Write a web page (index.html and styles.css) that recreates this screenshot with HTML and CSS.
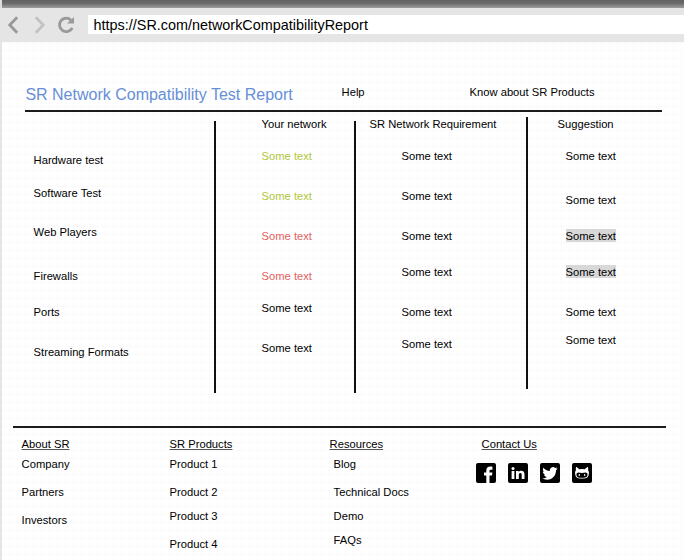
FILE: index.html
```html
<!DOCTYPE html>
<html lang="en">
<head>
<meta charset="utf-8">
<title>SR Network Compatibility Test Report</title>
<link rel="stylesheet" href="styles.css">
</head>
<body>
<div class="titlebar"></div>
<nav class="toolbar">
  <svg class="controls" width="88" height="34" viewBox="0 8 88 34" fill="none">
    <path d="M17.2 17.3 9.800 25l7.400 7.700" stroke="#999" stroke-width="2.800"/>
    <path d="M35.800 17.300 43.200 25l-7.400 7.700" stroke="#c2c2c2" stroke-width="2.800"/>
    <path d="M71 20.200A6.700 6.700 0 1 0 72.300 27.800" stroke="#999" stroke-width="2.800"/>
    <path d="M74 17v6.400h-7z" fill="#999"/>
  </svg>
  <div class="address">https://SR.com/networkCompatibilityReport</div>
</nav>
<main class="page">
  <header class="header">
    <h1>SR Network Compatibility Test Report</h1>
    <a class="help">Help</a>
    <a class="know">Know about SR Products</a>
  </header>
  <section class="report">
    <ul class="tests">
      <li>Hardware test</li>
      <li class="g17">Software Test</li>
      <li class="g23">Web Players</li>
      <li class="g28">Firewalls</li>
      <li class="g20">Ports</li>
      <li class="g24">Streaming Formats</li>
    </ul>
    <div class="divider"></div>
    <ul class="network">
      <li>Your network</li>
      <li class="g16 pass">Some text</li>
      <li class="g24 pass">Some text</li>
      <li class="g24 fail">Some text</li>
      <li class="g24 fail">Some text</li>
      <li class="g16">Some text</li>
      <li class="g24">Some text</li>
    </ul>
    <div class="divider"></div>
    <ul class="requirement">
      <li class="heading">SR Network Requirement</li>
      <li class="g16">Some text</li>
      <li class="g24">Some text</li>
      <li class="g24">Some text</li>
      <li class="g20">Some text</li>
      <li class="g24">Some text</li>
      <li class="g16">Some text</li>
    </ul>
    <div class="divider divider-high"></div>
    <ul class="suggestion">
      <li class="heading">Suggestion</li>
      <li class="g16">Some text</li>
      <li class="g28">Some text</li>
      <li class="g20"><mark>Some text</mark></li>
      <li class="g20"><mark>Some text</mark></li>
      <li class="g24">Some text</li>
      <li class="g12">Some text</li>
    </ul>
  </section>
  <footer class="footer">
    <ul class="about">
      <li><u>About SR</u></li>
      <li class="g4">Company</li>
      <li class="g12">Partners</li>
      <li class="g12">Investors</li>
    </ul>
    <ul class="products">
      <li><u>SR Products</u></li>
      <li class="g4">Product 1</li>
      <li class="g12">Product 2</li>
      <li class="g8">Product 3</li>
      <li class="g12">Product 4</li>
    </ul>
    <ul class="resources">
      <li class="heading"><u>Resources</u></li>
      <li class="g4">Blog</li>
      <li class="g12">Technical Docs</li>
      <li class="g8">Demo</li>
      <li class="g8">FAQs</li>
    </ul>
    <div class="contact">
      <u>Contact Us</u>
      <div class="social">
        <svg viewBox="0 0 20 20"><rect width="20" height="20" rx="2"/><path fill="#fff" d="M10.300 20v-7.500H8V9.400h2.300V7.500c0-2.700 1.600-3.900 3.900-3.900 1 0 1.800.1 2.200.2v2.900h-1.400c-1.200 0-1.500.5-1.500 1.300v1.400h2.900l-.4 3.100h-2.500V20z"/></svg>
        <svg viewBox="0 0 20 20"><rect width="20" height="20" rx="2"/><path fill="#fff" d="M3.600 8h2.800v8H3.600zM8 8h2.700v1.100c.6-.9 1.400-1.300 2.600-1.300 2.300 0 3.200 1.400 3.200 3.800V16h-2.800v-4.200c0-1.100-.4-1.800-1.300-1.800-1.100 0-1.600.8-1.600 1.900V16H8z"/><circle cx="5" cy="5.400" r="1.500" fill="#fff"/></svg>
        <svg viewBox="0 0 20 20"><rect width="20" height="20" rx="2"/><path fill="#fff" d="M17.600 5.500c-.6.300-1.200.4-1.800.5.700-.4 1.100-1 1.400-1.700-.6.400-1.300.6-2 .8A3.200 3.200 0 0 0 9.800 8C7.200 7.900 4.900 6.700 3.300 4.700c-.9 1.500-.4 3.300 1 4.300-.5 0-1-.2-1.500-.4 0 1.500 1.100 2.800 2.600 3.100-.5.100-1 .2-1.500.1.400 1.200 1.600 2.100 3 2.200-1.300 1-2.900 1.500-4.700 1.300 1.400.9 3.100 1.400 4.900 1.400 5.600 0 9-4.600 8.900-9.500.6-.4 1.200-1 1.600-1.700z"/></svg>
        <svg viewBox="0 0 20 20"><rect width="20" height="20" rx="2"/><path fill="#fff" d="M4.200 3.800 7.300 6.200Q10 5.600 12.700 6.200L15.800 3.800Q16.500 5.500 16.100 7.200 17.200 8.500 16.900 10.700 16.400 15.200 12.500 15.400H7.500Q3.600 15.200 3.100 10.700 2.800 8.500 3.900 7.200 3.500 5.500 4.200 3.800z"/><path d="M6.300 9.600Q10 10.300 13.700 9.600 16 9.800 15.600 12 15.200 14.500 12.200 14.700H7.800Q4.800 14.500 4.400 12 4 9.800 6.300 9.600z"/><ellipse cx="7.300" cy="12" rx=".7" ry="1.100" fill="#fff"/><ellipse cx="12.700" cy="12" rx=".7" ry="1.100" fill="#fff"/></svg>
      </div>
    </div>
  </footer>
</main>
</body>
</html>
```
FILE: styles.css
```css
* { box-sizing: border-box; }
body {
  margin: 0;
  height: 560px;
  overflow: hidden;
  background: #fff;
  color: #000;
  font: 11.2px/16px "Liberation Sans", Arial, sans-serif;
}
ul { list-style: none; margin: 0; padding: 0; flex: none; }
li { white-space: nowrap; }
.titlebar {
  height: 8px;
  border-left: 2px solid #ddd;
  background: linear-gradient(#616161 0, #696969 40%, #9d9d9d 100%);
}
.toolbar {
  height: 34px;
  display: flex;
  align-items: center;
  background: #e5e5e5;
}
.controls { flex: none; display: block; }
.address {
  flex: 1;
  height: 19px;
  margin-bottom: 1px;
  padding-left: 5.6px;
  background: #fff;
  font-size: 14.4px;
  line-height: 20px;
}
.page {
  height: 518px;
  padding-top: 42px;
  border-left: 2px solid #e5e5e5;
  background-color: #fff;
  background-image:
    linear-gradient(90deg, #fafafa 1px, transparent 1px),
    linear-gradient(#fafafa 1px, transparent 1px);
  background-size: 8px 8px;
  background-position: 7px 0;
}
.header {
  display: flex;
  width: 637px;
  height: 28px;
  margin-left: 23.4px;
  border-bottom: 2px solid #1c1c1c;
}
h1 {
  width: 316.2px;
  margin: 0;
  color: #668fd8;
  font-size: 16px;
  font-weight: normal;
  line-height: 21px;
}
.help { width: 128px; }
.report {
  display: flex;
  height: 314px;
  padding-top: 4px;
}
.tests { width: 212px; padding: 36px 0 0 31.6px; }
.divider {
  flex: none;
  width: 2px;
  height: 272px;
  margin-top: 5px;
  background: #111;
}
.divider-high { margin-top: 1px; }
.network { width: 138px; padding-left: 45.6px; }
.requirement { width: 170px; padding-left: 45.6px; }
.requirement .heading { margin-left: -32px; }
.suggestion { padding-left: 37.6px; }
.suggestion .heading { margin-left: -8px; }
.pass { color: #b0c83a; }
.fail { color: #e06262; }
mark {
  display: inline-block;
  height: 13px;
  margin-top: 1px;
  line-height: 14px;
  background: #d8d8d8;
  color: inherit;
  vertical-align: top;
}
.footer {
  display: flex;
  width: 653px;
  margin-left: 11px;
  padding: 8px 0 0 8.6px;
  border-top: 2px solid #1c1c1c;
}
.about { width: 148px; }
.products { width: 164px; }
.resources { width: 148px; }
.resources .heading { margin-left: -4px; }
u { text-underline-offset: 1px; text-decoration-color: #555; }
.social {
  display: flex;
  gap: 12px;
  margin: 11px 0 0 -5.3px;
}
.social svg { flex: none; width: 20px; height: 20px; }
.g4 { margin-top: 4px; }
.g8 { margin-top: 8px; }
.g12 { margin-top: 12px; }
.g16 { margin-top: 16px; }
.g17 { margin-top: 17px; }
.g20 { margin-top: 20px; }
.g23 { margin-top: 23px; }
.g24 { margin-top: 24px; }
.g28 { margin-top: 28px; }
```
